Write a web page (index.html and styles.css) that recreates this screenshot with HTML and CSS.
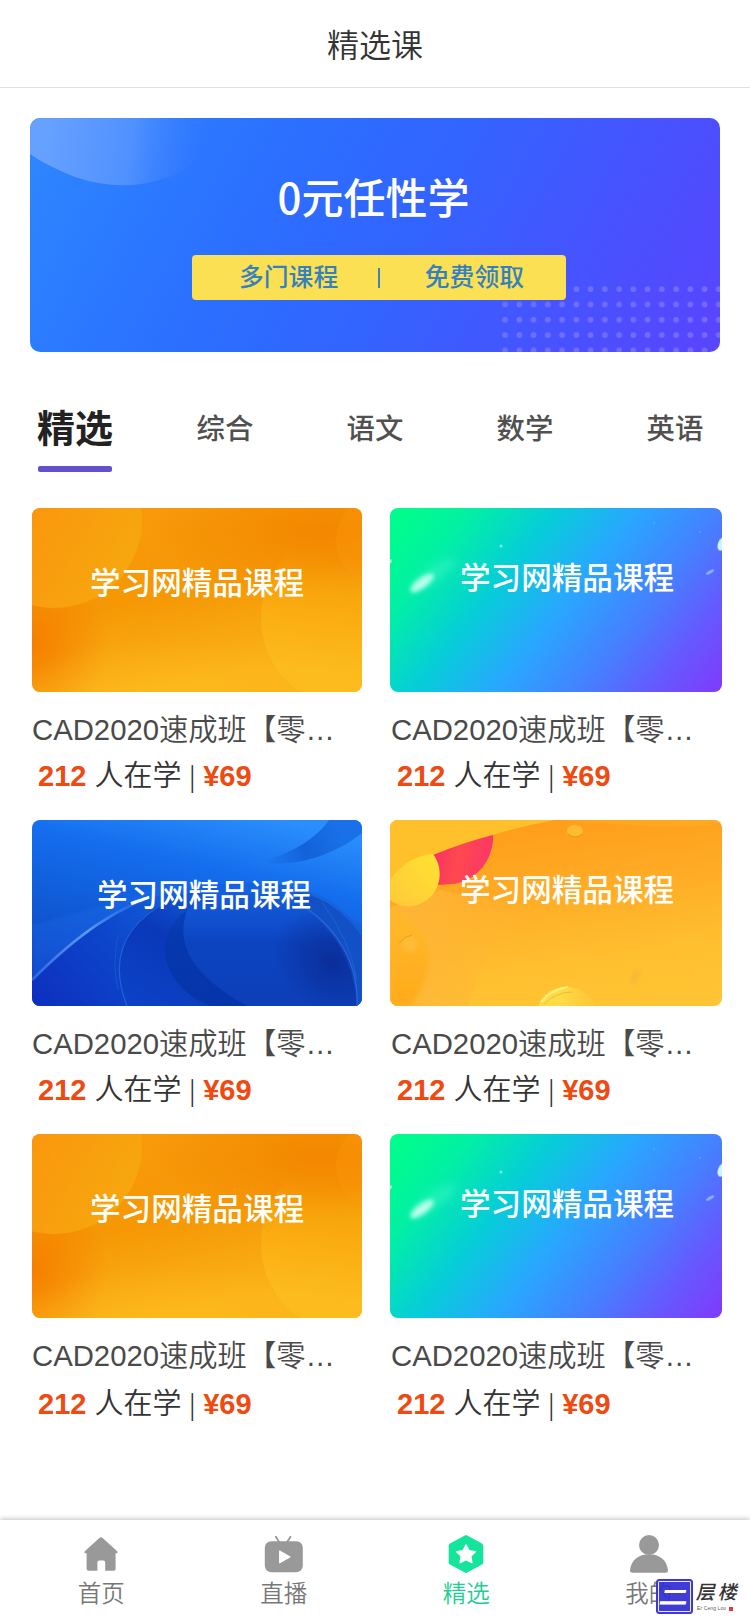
FILE: index.html
```html
<!DOCTYPE html>
<html lang="zh-CN">
<head>
<meta charset="utf-8">
<title>精选课</title>
<link rel="stylesheet" href="styles.css">
</head>
<body>
<svg class="defs" width="0" height="0" aria-hidden="true">
  <defs>
    <linearGradient id="o-bg" x1="0" y1="0" x2=".35" y2="1">
      <stop offset="0" stop-color="#f99a0c"/><stop offset=".55" stop-color="#f59804"/><stop offset="1" stop-color="#fbb31a"/>
    </linearGradient>
    <radialGradient id="o-dark"><stop offset="0" stop-color="#f67f00"/><stop offset="1" stop-color="#f67f00" stop-opacity="0"/></radialGradient>
    <radialGradient id="o-dark2"><stop offset="0" stop-color="#f38700"/><stop offset="1" stop-color="#f38700" stop-opacity="0"/></radialGradient>
    <radialGradient id="o-light"><stop offset="0" stop-color="#ffc01c" stop-opacity=".6"/><stop offset="1" stop-color="#ffb81c" stop-opacity="0"/></radialGradient>
    <linearGradient id="o-c1" x1="0" y1="0" x2="1" y2=".6"><stop offset=".2" stop-color="#fb900c"/><stop offset="1" stop-color="#f7a60e"/></linearGradient>
    <linearGradient id="o-c2" gradientUnits="userSpaceOnUse" x1="290" y1="45" x2="275" y2="165"><stop offset="0" stop-color="#f8a007" stop-opacity="0"/><stop offset=".5" stop-color="#faac10"/><stop offset="1" stop-color="#fdbc1e"/></linearGradient>
    <linearGradient id="g-bg" gradientUnits="userSpaceOnUse" x1="25" y1="0" x2="300" y2="216">
      <stop offset="0" stop-color="#00fc8e"/><stop offset=".13" stop-color="#02f0a4"/><stop offset=".32" stop-color="#06cdd8"/><stop offset=".5" stop-color="#28a8fe"/><stop offset=".7" stop-color="#467fff"/><stop offset=".86" stop-color="#6658fe"/><stop offset="1" stop-color="#7e3cfc"/>
    </linearGradient>
    <linearGradient id="b-bg" x1=".75" y1="0" x2=".35" y2="1"><stop offset="0" stop-color="#2a8efc"/><stop offset=".3" stop-color="#146ded"/><stop offset=".7" stop-color="#0f56d2"/><stop offset="1" stop-color="#0e3fc4"/></linearGradient>
    <linearGradient id="b-s1" gradientUnits="userSpaceOnUse" x1="10" y1="186" x2="150" y2="70"><stop offset="0" stop-color="#0e30c0"/><stop offset=".5" stop-color="#0c45ca"/><stop offset="1" stop-color="#1462de"/></linearGradient>
    <linearGradient id="b-s2" gradientUnits="userSpaceOnUse" x1="100" y1="186" x2="170" y2="64"><stop offset="0" stop-color="#0c42c8"/><stop offset=".55" stop-color="#0a38b8"/><stop offset="1" stop-color="#155fdc"/></linearGradient>
    <linearGradient id="b-s3" gradientUnits="userSpaceOnUse" x1="210" y1="72" x2="210" y2="186"><stop offset="0" stop-color="#145ede"/><stop offset=".45" stop-color="#0c44c0"/><stop offset="1" stop-color="#0d3fb8"/></linearGradient>
    <radialGradient id="b-s3d"><stop offset="0" stop-color="#0a2a94"/><stop offset="1" stop-color="#0a2a94" stop-opacity="0"/></radialGradient>
    <linearGradient id="b-s4" gradientUnits="userSpaceOnUse" x1="235" y1="45" x2="305" y2="8"><stop offset="0" stop-color="#145fdc" stop-opacity="0"/><stop offset=".5" stop-color="#1262d8"/><stop offset="1" stop-color="#1a70e8"/></linearGradient>
    <linearGradient id="b-line" gradientUnits="userSpaceOnUse" x1="0" y1="160" x2="120" y2="75"><stop offset="0" stop-color="#2b68e0"/><stop offset=".5" stop-color="#5a98f2"/><stop offset="1" stop-color="#3a86f6" stop-opacity="0"/></linearGradient>
    <linearGradient id="y-bg" x1=".4" y1="0" x2=".65" y2="1"><stop offset="0" stop-color="#ff9d1a"/><stop offset=".35" stop-color="#ffaa24"/><stop offset=".75" stop-color="#ffbf2f"/><stop offset="1" stop-color="#ffc433"/></linearGradient>
    <linearGradient id="y-pink" x1="0" y1="0" x2="1" y2=".2"><stop offset="0" stop-color="#f72f68"/><stop offset=".5" stop-color="#ff484e"/><stop offset="1" stop-color="#fb3768"/></linearGradient>
    <linearGradient id="y-ball" x1="1" y1="0" x2="0" y2="1"><stop offset="0" stop-color="#ffe331"/><stop offset="1" stop-color="#ffc83a"/></linearGradient>
    <linearGradient id="y-soft" x1="0" y1="0" x2="1" y2="0"><stop offset="0" stop-color="#ffb63b"/><stop offset="1" stop-color="#ffb632" stop-opacity="0"/></linearGradient>
    <linearGradient id="y-low" x1="0" y1="0" x2="0" y2="1"><stop offset="0" stop-color="#ffb92c"/><stop offset="1" stop-color="#ffab1c"/></linearGradient>
    <linearGradient id="y-coin" x1="0" y1="0" x2="1" y2="0"><stop offset=".4" stop-color="#ffdb48"/><stop offset="1" stop-color="#ffcd3d" stop-opacity=".3"/></linearGradient>
    <linearGradient id="bn-c" x1="0" y1="0" x2="1" y2=".05"><stop offset=".1" stop-color="#66a1ff"/><stop offset=".55" stop-color="#5091ff"/><stop offset="1" stop-color="#2d74ff" stop-opacity="0"/></linearGradient>
    <pattern id="bn-dots" patternUnits="userSpaceOnUse" x="468" y="163.5" width="14.25" height="15.3"><circle cx="7.1" cy="7.6" r="2.9" fill="#9a93ff" fill-opacity=".45"/></pattern>
    <filter id="soft1"><feGaussianBlur stdDeviation=".7"/></filter>
    <filter id="soft2" x="-40%" y="-60%" width="180%" height="220%"><feGaussianBlur stdDeviation="2"/></filter>
    <filter id="soft6" x="-50%" y="-80%" width="200%" height="260%"><feGaussianBlur stdDeviation="5"/></filter>

    <symbol id="art-orange" viewBox="0 0 330 184" preserveAspectRatio="none">
      <rect width="330" height="184" fill="url(#o-bg)"/>
      <ellipse cx="0" cy="135" rx="75" ry="85" fill="url(#o-dark)"/>
      <ellipse cx="290" cy="22" rx="170" ry="65" fill="url(#o-dark2)"/>
      <ellipse cx="150" cy="190" rx="180" ry="60" fill="url(#o-light)"/>
      <circle cx="22" cy="12" r="88" fill="url(#o-c1)"/>
      <circle cx="319" cy="110" r="90" fill="url(#o-c2)"/>
      <circle cx="350" cy="32" r="46" fill="#ff9d10" fill-opacity=".25"/>
    </symbol>
    <symbol id="art-green" viewBox="0 0 332 184" preserveAspectRatio="none">
      <rect width="332" height="184" fill="url(#g-bg)"/>
      <ellipse cx="44" cy="66" rx="26" ry="7" transform="rotate(-35 44 66)" fill="#5cffd0" fill-opacity=".35" filter="url(#soft6)"/>
      <ellipse cx="32" cy="75" rx="14" ry="5" transform="rotate(-37 32 75)" fill="#b8ffea" filter="url(#soft2)"/>
      <ellipse cx="332" cy="36" rx="4" ry="7" transform="rotate(20 332 36)" fill="#d2f4ff" filter="url(#soft1)"/>
      <ellipse cx="320" cy="64" rx="4.5" ry="1.6" transform="rotate(-30 320 64)" fill="#8fb4ff" filter="url(#soft1)"/>
      <circle cx="111" cy="38" r="1.6" fill="#6df3e0"/>
      <circle cx="0" cy="53" r="2" fill="#9effcf"/>
      <circle cx="264" cy="15" r=".7" fill="#6fb8ff"/><circle cx="310" cy="24" r=".7" fill="#6fa8ff"/>
    </symbol>
    <symbol id="art-blue" viewBox="0 0 330 186" preserveAspectRatio="none">
      <rect width="330" height="186" fill="url(#b-bg)"/>
      <path d="M225 42C258 35 284 19 297 0H330V13C300 37 260 48 225 42Z" fill="url(#b-s4)"/>
      <path d="M0 105C50 92 90 80 140 62H200L120 84Q50 115 0 160Z" fill="#1b6bea" fill-opacity=".3" filter="url(#soft2)"/>
      <path d="M0 160C45 115 95 76 170 66S305 68 330 115V186H0Z" fill="url(#b-s1)"/>
      <path d="M0 160C45 115 85 86 135 72" fill="none" stroke="url(#b-line)" stroke-width="2.6" filter="url(#soft1)"/>
      <path d="M95 186C75 135 95 100 140 78C200 55 290 75 326 175V186Z" fill="url(#b-s2)"/>
      <path d="M95 186C75 135 95 102 138 80" fill="none" stroke="#2260da" stroke-width="1.2"/>
      <path d="M86 170Q80 145 86 115" fill="none" stroke="#1d58d0" stroke-width=".8"/>
      <path d="M178 186C128 165 118 115 155 90C185 70 235 68 270 86Q318 118 326 186Z" fill="url(#b-s3)"/>
      <path d="M178 186C128 165 118 115 155 90C143 125 160 155 215 186Z" fill="#0a2c9e" fill-opacity=".5" filter="url(#soft1)"/>
      <ellipse cx="300" cy="142" rx="62" ry="50" transform="rotate(35 300 142)" fill="url(#b-s3d)" fill-opacity=".85"/>
      <path d="M262 80C306 105 327 145 325 186H330V115Q306 80 265 72Z" fill="#1250c6"/>
      <path d="M262 80C306 105 327 145 325 186" fill="none" stroke="#2864da" stroke-width="1.4"/>
      <path d="M290 82Q318 120 325 160" fill="none" stroke="#1f5fd8" stroke-width="1"/>
      <path d="M280 74Q310 87 330 115" fill="none" stroke="#2668dc" stroke-width=".8"/>
    </symbol>
    <symbol id="art-yellow" viewBox="0 0 332 186" preserveAspectRatio="none">
      <rect width="332" height="186" fill="url(#y-bg)"/>
      <path d="M0 88L50 70L150 90Q95 120 78 186H0Z" fill="url(#y-soft)"/>
      <path d="M0 87Q20 92 35 120Q47 152 20 186H0Z" fill="url(#y-low)" filter="url(#soft2)"/>
      <path d="M0 0H165Q105 11 43 35L0 66Z" fill="#ffc12b"/>
      <path d="M260 6Q310 8 332 3V0H170Z" fill="#ffad21" fill-opacity=".6"/>
      <path d="M43 35Q75 22 103 15C104 39 87 61 63 64L48 65Z" fill="url(#y-pink)"/>
      <path d="M43 34C54 49 51 69 37 80C25 89 10 88 0 80V60C12 43 28 35 43 34Z" fill="url(#y-ball)"/>
      <ellipse cx="185" cy="11" rx="8" ry="6" fill="#ffbc31"/><path d="M178 14Q185 20 192 14" fill="none" stroke="#e49a20" stroke-width="1"/>
      <circle cx="20" cy="124" r="8" fill="#ffbc38" filter="url(#soft2)"/><path d="M9 123Q15 116 22 115" fill="none" stroke="#dda32a" stroke-width="1"/>
      <path d="M148 186C157 161 195 160 205 186Z" fill="url(#y-coin)"/>
      <path d="M151 182Q162 169 178 167" fill="none" stroke="#fff07a" stroke-width="2"/>
      <path d="M154 184Q166 172 182 172" fill="none" stroke="#e5b62b" stroke-width=".8"/>
      <ellipse cx="245" cy="157" rx="8" ry="3" transform="rotate(-60 245 157)" fill="#f2b13c" fill-opacity=".6" filter="url(#soft2)"/>
    </symbol>
  </defs>
</svg>

<header class="topbar"><h1 class="topbar-title">精选课</h1></header>

<main class="page">
  <section class="banner">
    <svg class="art" viewBox="0 0 690 234" aria-hidden="true">
      <path d="M0 0H190Q178 42 142 58Q95 76 45 59Q15 47 0 36Z" fill="url(#bn-c)"/>
      <rect x="468" y="163.5" width="222" height="70.5" fill="url(#bn-dots)"/>
    </svg>
    <h2 class="banner-title">0元任性学</h2>
    <div class="banner-tag"><span>多门课程</span><i class="banner-rule"></i><span>免费领取</span></div>
  </section>

  <nav class="tabs">
    <a class="tab tab-active">精选</a>
    <a class="tab">综合</a>
    <a class="tab">语文</a>
    <a class="tab">数学</a>
    <a class="tab">英语</a>
  </nav>

  <section class="courses">
    <article class="card">
      <div class="thumb thumb-orange"><svg class="art"><use href="#art-orange"/></svg><span class="thumb-text">学习网精品课程</span></div>
      <h3 class="name">CAD2020速成班【零…</h3>
      <p class="meta"><b>212</b> 人在学 <span class="sep">|</span> <b>¥69</b></p>
    </article>
    <article class="card card-right">
      <div class="thumb thumb-green"><svg class="art"><use href="#art-green"/></svg><span class="thumb-text">学习网精品课程</span></div>
      <h3 class="name">CAD2020速成班【零…</h3>
      <p class="meta"><b>212</b> 人在学 <span class="sep">|</span> <b>¥69</b></p>
    </article>
    <article class="card">
      <div class="thumb thumb-blue"><svg class="art"><use href="#art-blue"/></svg><span class="thumb-text">学习网精品课程</span></div>
      <h3 class="name">CAD2020速成班【零…</h3>
      <p class="meta"><b>212</b> 人在学 <span class="sep">|</span> <b>¥69</b></p>
    </article>
    <article class="card card-right">
      <div class="thumb thumb-yellow"><svg class="art"><use href="#art-yellow"/></svg><span class="thumb-text">学习网精品课程</span></div>
      <h3 class="name">CAD2020速成班【零…</h3>
      <p class="meta"><b>212</b> 人在学 <span class="sep">|</span> <b>¥69</b></p>
    </article>
    <article class="card card-last">
      <div class="thumb thumb-orange"><svg class="art"><use href="#art-orange"/></svg><span class="thumb-text">学习网精品课程</span></div>
      <h3 class="name">CAD2020速成班【零…</h3>
      <p class="meta"><b>212</b> 人在学 <span class="sep">|</span> <b>¥69</b></p>
    </article>
    <article class="card card-right card-last">
      <div class="thumb thumb-green"><svg class="art"><use href="#art-green"/></svg><span class="thumb-text">学习网精品课程</span></div>
      <h3 class="name">CAD2020速成班【零…</h3>
      <p class="meta"><b>212</b> 人在学 <span class="sep">|</span> <b>¥69</b></p>
    </article>
  </section>
</main>

<footer class="tabbar">
  <a class="item">
    <svg class="icon" viewBox="0 0 40 40"><path d="M20 3.2Q20.8 3.2 21.6 4L36.2 17.2Q37.3 18.5 35.8 19.2H34.6V35Q34.6 36.8 32.8 36.8H24.2V28.5Q24.2 26.6 22.3 26.6H18.3Q16.4 26.6 16.4 28.5V36.8H7.4Q5.6 36.8 5.6 35V19.2H4.2Q2.7 18.5 3.8 17.2L18.4 4Q19.2 3.2 20 3.2Z" fill="#999"/></svg>
    <span>首页</span>
  </a>
  <a class="item">
    <svg class="icon" viewBox="0 0 40 40"><path d="M11.8 2.8L15.5 8.5M26.5 2.8L22.8 8.5" stroke="#999" stroke-width="1.8" stroke-linecap="round"/><rect x=".8" y="7.2" width="38" height="31" rx="6.5" fill="#999"/><path d="M15.6 16.8V29L26.2 22.9Z" fill="#fff" stroke="#fff" stroke-width="1" stroke-linejoin="round"/></svg>
    <span>直播</span>
  </a>
  <a class="item item-active">
    <svg class="icon" viewBox="0 0 40 40"><path d="M20 3.6L34.8 11.8V28.2L20 36.4L5.2 28.2V11.8Z" fill="#15e49b" stroke="#15e49b" stroke-width="5" stroke-linejoin="round"/><path d="M20 11L22.9 16.8L29.3 17.7L24.6 22.2L25.8 28.6L20 25.5L14.2 28.6L15.4 22.2L10.7 17.7L17.1 16.8Z" fill="#fff" stroke="#fff" stroke-width="1.6" stroke-linejoin="round"/></svg>
    <span>精选</span>
  </a>
  <a class="item">
    <svg class="icon" viewBox="0 0 40 40"><circle cx="20" cy="11" r="10" fill="#999"/><path d="M1 36.5C2 26 9.5 20.2 20 20.2S38 26 39 36.5Q39 38.8 36.8 38.8H3.2Q1 38.8 1 36.5Z" fill="#999"/></svg>
    <span>我的</span>
  </a>
  <div class="brand">
    <div class="seal"><span>二</span></div>
    <div class="brand-text">
      <div class="brand-name">层楼</div>
      <div class="brand-sub">Er Ceng Lou<i></i></div>
    </div>
  </div>
</footer>
</body>
</html>
```
FILE: styles.css
```css
* { box-sizing: border-box; }
body {
  margin: 0;
  width: 750px;
  height: 1623px;
  overflow: hidden;
  display: flex;
  flex-direction: column;
  background: #fff;
  color: #333;
  font-family: "Liberation Sans", "Noto Sans CJK SC", sans-serif;
}
h1, h2, h3, p { margin: 0; font-weight: 400; }
.defs { position: absolute; }
.topbar {
  height: 88px;
  flex: none;
  display: flex;
  align-items: center;
  justify-content: center;
  padding-top: 4px;
  border-bottom: 1px solid #e0e0e0;
}
.topbar-title { font-size: 32px; line-height: 40px; font-weight: 350; color: #333; }
.page { flex: 1; padding: 30px 28px 0 30px; }
.art { position: absolute; inset: 0; width: 100%; height: 100%; }

.banner {
  position: relative;
  width: 690px;
  height: 234px;
  padding: 51px 0 0 2px;
  overflow: hidden;
  border-radius: 10px;
  background: linear-gradient(119deg, #2d88ff 0%, #2b70ff 32%, #3264ff 54%, #4852ff 79%, #5a44fe 100%);
  display: flex;
  flex-direction: column;
  align-items: center;
}
.banner-title {
  position: relative;
  margin-right: 5px;
  font: 500 42px/54px "Noto Sans CJK SC", sans-serif;
  color: #fff;
}
.banner-tag {
  position: relative;
  width: 374px;
  height: 45px;
  margin: 32px 0 0 6px;
  padding: 0 42px 0 47px;
  border-radius: 4px;
  background: #fae052;
  color: #3480c0;
  font-size: 24.8px;
  line-height: 40px;
  font-weight: 500;
  display: flex;
  align-items: center;
  justify-content: space-between;
}
.banner-rule { width: 2px; height: 20px; margin-right: 5px; background: #3f83b8; }

.tabs { display: flex; width: 750px; margin-left: -30px; height: 156px; padding-top: 52px; }
.tab {
  flex: 1;
  display: flex;
  flex-direction: column;
  align-items: center;
  font-size: 28.4px;
  line-height: 50px;
  font-weight: 500;
  color: #505050;
}
.tab-active { font-size: 38px; font-weight: 700; color: #222; }
.tab-active::after { content: ""; width: 74px; height: 6px; margin-top: 12px; border-radius: 2px; background: #6450cc; }

.courses {
  display: grid;
  grid-template-columns: 330px 332px;
  grid-template-rows: 312px 314px 312px;
  column-gap: 28px;
  padding-left: 2px;
}
.thumb { position: relative; height: 184px; border-radius: 8px; overflow: hidden; }
.thumb-text { position: relative; display: block; font-size: 30.6px; line-height: 40px; font-weight: 500; color: #fff; white-space: nowrap; }
.thumb-orange { padding: 55px 0 0 58px; }
.thumb-green { padding: 50px 0 0 70px; }
.thumb-blue { height: 186px; padding: 55px 0 0 65px; }
.thumb-yellow { height: 186px; padding: 50px 0 0 70px; }
.name {
  padding-top: 18px;
  font-size: 29.3px;
  line-height: 40px;
  font-weight: 350;
  color: #4a4a4a;
  white-space: nowrap;
}
.meta { padding-left: 6px; font-size: 29px; line-height: 52px; font-weight: 350; color: #333; white-space: nowrap; }
.meta b { font-weight: 700; color: #ee4a12; }
.meta .sep { margin: 0 -.5px; font-family: "Noto Sans CJK SC", sans-serif; font-size: 25px; line-height: 1; }
.card-right .name { padding-left: 1px; }
.card-right .meta { padding-left: 7px; }
.card-last .meta { line-height: 56px; }

.tabbar {
  position: relative;
  flex: none;
  height: 103px;
  padding: 14px 10px 0;
  display: flex;
  background: #fff;
  box-shadow: 0 -1px 5px rgba(0, 0, 0, .25);
}
.item { flex: 1; display: flex; flex-direction: column; align-items: center; font-size: 23.5px; line-height: 36px; font-weight: 350; color: #777; }
.item-active { color: #1fce93; }
.icon { width: 40px; height: 40px; margin-bottom: 2px; }

.brand { position: absolute; left: 656px; top: 59px; display: flex; gap: 4px; }
.seal {
  width: 37px;
  height: 35px;
  border-radius: 3px;
  border: 1px solid #3b38d6;
  outline: 1px solid #e9e9ff;
  outline-offset: -3px;
  background: rgba(50, 45, 212, .93);
  color: #fff;
  display: flex;
  align-items: center;
  justify-content: center;
  font-size: 26px;
  line-height: 30px;
  font-weight: 900;
}
.seal span { transform: skewX(-12deg) scale(1.12, .75); }
.brand-text { padding-top: 2px; color: #333; }
.brand-name { font-size: 19px; line-height: 24px; font-weight: 500; letter-spacing: 3px; transform: skewX(-12deg); white-space: nowrap; }
.brand-sub { display: flex; align-items: center; gap: 3px; padding-top: 1px; font-size: 4.8px; line-height: 6px; letter-spacing: .2px; color: #555; white-space: nowrap; }
.brand-sub i { width: 4px; height: 4px; background: #e33a34; }
```
